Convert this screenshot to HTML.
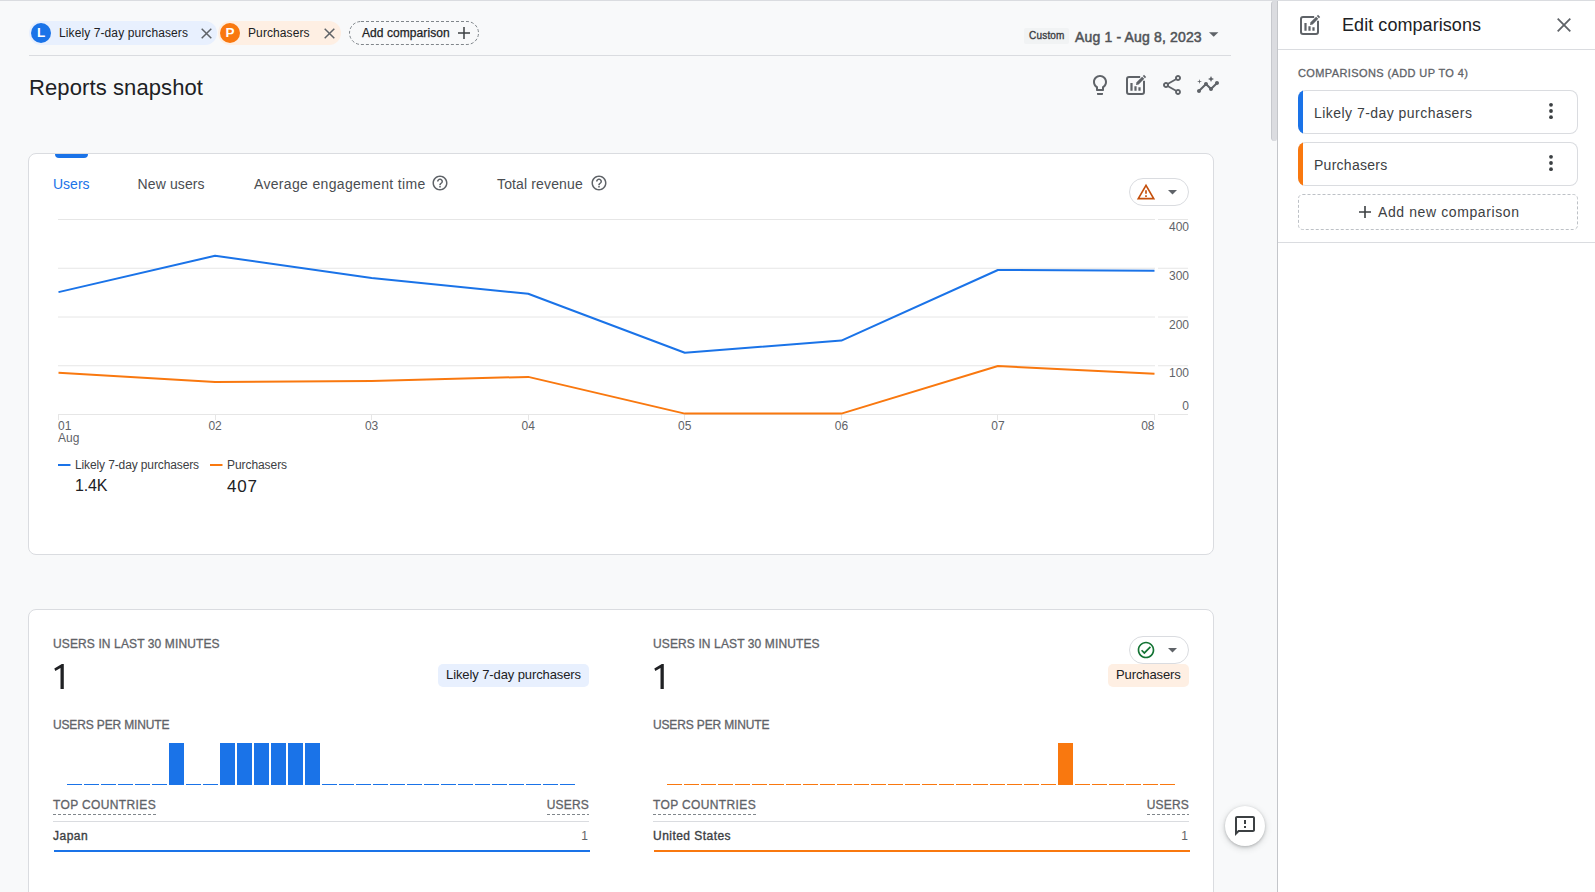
<!DOCTYPE html>
<html>
<head>
<meta charset="utf-8">
<title>Reports snapshot</title>
<style>
*{box-sizing:border-box;margin:0;padding:0}
html,body{width:1595px;height:892px;overflow:hidden;background:#f8f9fa;font-family:"Liberation Sans",sans-serif;color:#3c4043}
.abs{position:absolute}
.t{position:absolute;white-space:nowrap;line-height:1}
.med{-webkit-text-stroke:0.35px currentColor}
#topline{left:0;top:0;width:1595px;height:1px;background:#dadce0}
.chip{position:absolute;top:21px;height:24px;border-radius:12px}
.dot{position:absolute;top:2px;left:2px;width:20px;height:20px;border-radius:50%;color:#fff;font-size:13.5px;font-weight:bold;line-height:20px;text-align:center}
.hr{position:absolute;height:1px;background:#dadce0}
.card{position:absolute;background:#fff;border:1px solid #dadce0;border-radius:8px}
svg{position:absolute;overflow:visible}
.tab{font-size:14px;color:#4a4d51}
.ax{font-size:12px;color:#5f6368}
.pc{left:1298px;width:280px;height:44px;box-shadow:inset 0 0 0 1px #dadce0;border-radius:8px;background:#fff;overflow:hidden}
.pc i{position:absolute;left:0;top:0;width:4.7px;height:100%}
.pct{font-size:14px;color:#3c4043}
.cap{font-size:12px;color:#5f6368;letter-spacing:0.3px;-webkit-text-stroke:0.3px currentColor}
.cap2{font-size:12px;color:#5f6368;letter-spacing:0.37px;-webkit-text-stroke:0.3px currentColor}
.pill{width:60px;height:28px;border:1px solid #dadce0;border-radius:14px;background:#fff}
</style>
</head>
<body>
<div class="abs" id="topline"></div>

<!-- comparison chips -->
<div class="chip" style="left:29px;width:188px;background:#e8f0fe">
  <div class="dot" style="background:#1a73e8">L</div>
  <div class="t" style="left:30px;top:6px;font-size:12px;color:#202124;letter-spacing:0.1px">Likely 7-day purchasers</div>
  <svg style="left:172px;top:7px" width="11" height="11" viewBox="0 0 11 11"><path d="M0.7 0.7L10.3 10.3M10.3 0.7L0.7 10.3" stroke="#5f6368" stroke-width="1.5" fill="none"/></svg>
</div>
<div class="chip" style="left:218px;width:123px;background:#feefe3">
  <div class="dot" style="background:#f9780f">P</div>
  <div class="t" style="left:30px;top:6px;font-size:12px;color:#202124;letter-spacing:0.1px">Purchasers</div>
  <svg style="left:105.5px;top:7px" width="11" height="11" viewBox="0 0 11 11"><path d="M0.7 0.7L10.3 10.3M10.3 0.7L0.7 10.3" stroke="#5f6368" stroke-width="1.5" fill="none"/></svg>
</div>
<svg style="left:349px;top:21px" width="130" height="24" viewBox="0 0 130 24"><rect x="0.5" y="0.5" width="129" height="23" rx="11.5" fill="none" stroke="#80868b" stroke-width="1" stroke-dasharray="3 2"/></svg>
<div class="abs" style="left:350px;top:22px;width:128px;height:22px">
  <div class="t med" style="left:12px;top:5px;font-size:12px;color:#202124;letter-spacing:0.07px;-webkit-text-stroke:0.25px currentColor">Add comparison</div>
  <svg style="left:108px;top:5px" width="12" height="12" viewBox="0 0 12 12"><path d="M6 0V12M0 6H12" stroke="#3c4043" stroke-width="1.5" fill="none"/></svg>
</div>

<!-- date range -->
<div class="abs" style="left:1024px;top:28px;width:45px;height:16px;background:#f1f3f4;border-radius:2px"></div>
<div class="t med" style="left:1029px;top:31px;font-size:10px;color:#3c4043;letter-spacing:0.2px">Custom</div>
<div class="t med" id="daterange" style="left:1075px;top:30px;font-size:14px;color:#505357;letter-spacing:0.16px;-webkit-text-stroke:0.5px currentColor">Aug 1 - Aug 8, 2023</div>
<svg style="left:1209.2px;top:32px" width="9.4" height="5" viewBox="0 0 10 5"><path d="M0 0H10L5 5Z" fill="#5f6368"/></svg>

<div class="hr" style="left:29px;top:55px;width:1202px"></div>

<div class="t" id="title" style="left:29px;top:77px;font-size:22px;letter-spacing:0.1px;color:#202124">Reports snapshot</div>


<svg width="0" height="0" style="left:0;top:0"><defs>
<g id="editcmp"><path d="M16.2 4H5a2 2 0 0 0-2 2v13a2 2 0 0 0 2 2h13a2 2 0 0 0 2-2V7.8" stroke="#5f6368" stroke-width="2" fill="none"/><path d="M7.5 10V17.8M11.5 13.2V17.8M15.5 14.2V17.8" stroke="#5f6368" stroke-width="2.2" fill="none"/><path d="M12 12L12.54 9.34L18.14 3.74L20.26 5.86L14.66 11.46Z" fill="#5f6368"/><path d="M18.84 3.04L20.04 1.84L22.16 3.96L20.96 5.16Z" fill="#5f6368"/></g>
<g id="help"><path d="M11 18h2v-2h-2v2zm1-16C6.48 2 2 6.48 2 12s4.48 10 10 10 10-4.48 10-10S17.52 2 12 2zm0 18c-4.41 0-8-3.59-8-8s3.590-8 8-8 8 3.590 8 8-3.590 8-8 8zm0-14c-2.210 0-4 1.790-4 4h2c0-1.100.900-2 2-2s2 .900 2 2c0 2-3 1.750-3 5h2c0-2.250 3-2.500 3-5 0-2.210-1.790-4-4-4z" fill="#5f6368"/></g>
</defs></svg>

<!-- header icons -->
<svg style="left:1088px;top:73px" width="24" height="24" viewBox="0 0 24 24" fill="#5f6368"><path d="M9 21c0 .55.45 1 1 1h4c.55 0 1-.45 1-1v-1H9v1zm3-19C8.14 2 5 5.14 5 9c0 2.38 1.19 4.47 3 5.74V17c0 .55.45 1 1 1h6c.55 0 1-.45 1-1v-2.26c1.81-1.27 3-3.36 3-5.74 0-3.86-3.14-7-7-7zm2.85 11.1l-.85.6V16h-4v-2.3l-.85-.6C7.8 12.16 7 10.63 7 9c0-2.76 2.24-5 5-5s5 2.24 5 5c0 1.63-.8 3.16-2.15 4.1z"/></svg>
<svg style="left:1124px;top:73px" width="24" height="24" viewBox="0 0 24 24"><use href="#editcmp"/></svg>
<svg style="left:1160px;top:73px" width="24" height="24" viewBox="0 0 24 24" fill="#5f6368" fill-rule="evenodd"><path d="M18 16.08c-.76 0-1.44.3-1.96.77L8.91 12.7c.05-.23.09-.46.09-.7s-.04-.47-.09-.7l7.05-4.11c.54.5 1.25.81 2.04.81 1.66 0 3-1.34 3-3s-1.34-3-3-3-3 1.34-3 3c0 .24.04.47.09.7L8.04 9.81C7.5 9.31 6.79 9 6 9c-1.66 0-3 1.34-3 3s1.34 3 3 3c.79 0 1.5-.31 2.04-.81l7.12 4.16c-.05.21-.08.43-.08.65 0 1.61 1.31 2.92 2.92 2.92s2.92-1.31 2.92-2.92c0-1.61-1.31-2.92-2.92-2.92zM18 4c.55 0 1 .45 1 1s-.45 1-1 1-1-.45-1-1 .45-1 1-1zM6 13c-.55 0-1-.45-1-1s.45-1 1-1 1 .45 1 1-.45 1-1 1zm12 7.02c-.55 0-1-.45-1-1s.45-1 1-1 1 .45 1 1-.45 1-1 1z"/></svg>
<svg style="left:1196px;top:73px" width="24" height="24" viewBox="0 0 24 24" fill="#5f6368"><path d="M21 8c-1.45 0-2.26 1.44-1.93 2.51l-3.55 3.56c-.3-.09-.74-.09-1.04 0l-2.55-2.55C12.27 10.45 11.46 9 10 9c-1.45 0-2.27 1.44-1.93 2.52l-4.56 4.55C2.44 15.74 1 16.55 1 18c0 1.1.9 2 2 2 1.45 0 2.26-1.44 1.93-2.51l4.55-4.56c.3.09.74.09 1.04 0l2.55 2.55C12.73 16.55 13.54 18 15 18c1.45 0 2.27-1.44 1.93-2.52l3.56-3.55c1.07.33 2.51-.48 2.51-1.93 0-1.1-.9-2-2-2z"/><path d="M15 9l.94-2.07L18 6l-2.06-.93L15 3l-.92 2.07L12 6l2.08.93z"/><path d="M3.5 11L4 9l2-.5L4 8l-.5-2L3 8l-2 .5L3 9z"/></svg>

<!-- MAIN CHART CARD -->
<div class="card" id="card1" style="left:28px;top:153px;width:1186px;height:402px"></div>


<div class="abs" style="left:55px;top:154px;width:33px;height:4px;background:#1a73e8;border-radius:0 0 4px 4px"></div>
<div class="t tab" id="tab1" style="left:53px;top:177px;color:#1a73e8">Users</div>
<div class="t tab" id="tab2" style="letter-spacing:0.12px;left:137.5px;top:177px">New users</div>
<div class="t tab" id="tab3" style="letter-spacing:0.33px;left:254px;top:177px">Average engagement time</div>
<svg style="left:431px;top:174px" width="18" height="18" viewBox="0 0 24 24"><use href="#help"/></svg>
<div class="t tab" id="tab4" style="letter-spacing:0.14px;left:497px;top:177px">Total revenue</div>
<svg style="left:589.6px;top:174px" width="18" height="18" viewBox="0 0 24 24"><use href="#help"/></svg>
<div class="abs pill" style="left:1129px;top:178px"></div>
<svg style="left:1136px;top:182px" width="20" height="20" viewBox="0 0 24 24" fill="#c5500d"><path d="M12 5.99L19.53 19H4.47L12 5.99M12 2L1 21h22L12 2zm1 14h-2v2h2v-2zm0-6h-2v4h2v-4z"/></svg>
<svg style="left:1167.7px;top:189.9px" width="9" height="4.5" viewBox="0 0 10 5"><path d="M0 0H10L5 5Z" fill="#5f6368"/></svg>

<svg id="chart" style="left:0;top:0" width="1270" height="600" viewBox="0 0 1270 600">
<line x1="58" y1="219.5" x2="1155" y2="219.5" stroke="#e6e6e6" stroke-width="1"/><line x1="1158" y1="219.5" x2="1188" y2="219.5" stroke="#e6e6e6" stroke-width="1"/><line x1="58" y1="268.25" x2="1155" y2="268.25" stroke="#e6e6e6" stroke-width="1"/><line x1="1158" y1="268.25" x2="1188" y2="268.25" stroke="#e6e6e6" stroke-width="1"/><line x1="58" y1="317" x2="1155" y2="317" stroke="#e6e6e6" stroke-width="1"/><line x1="1158" y1="317" x2="1188" y2="317" stroke="#e6e6e6" stroke-width="1"/><line x1="58" y1="365.75" x2="1155" y2="365.75" stroke="#e6e6e6" stroke-width="1"/><line x1="1158" y1="365.75" x2="1188" y2="365.75" stroke="#e6e6e6" stroke-width="1"/><line x1="58" y1="414.5" x2="1155" y2="414.5" stroke="#e6e6e6" stroke-width="1"/><line x1="1158" y1="414.5" x2="1188" y2="414.5" stroke="#e6e6e6" stroke-width="1"/><rect x="58" y="414" width="1" height="6" fill="#e6e6e6"/><rect x="215" y="414" width="1" height="6" fill="#e6e6e6"/><rect x="371" y="414" width="1" height="6" fill="#e6e6e6"/><rect x="528" y="414" width="1" height="6" fill="#e6e6e6"/><rect x="684" y="414" width="1" height="6" fill="#e6e6e6"/><rect x="841" y="414" width="1" height="6" fill="#e6e6e6"/><rect x="997" y="414" width="1" height="6" fill="#e6e6e6"/><rect x="1154" y="414" width="1" height="6" fill="#e6e6e6"/>
<polyline points="58.5,372.8 215.1,382.1 371.6,380.9 528.2,376.9 684.8,413.6 841.4,413.6 997.9,366.0 1154.5,373.7" fill="none" stroke="#f9780f" stroke-width="2" stroke-linejoin="round"/>
<polyline points="58.5,292.1 215.1,255.8 371.6,278.0 528.2,293.8 684.8,352.7 841.4,340.6 997.9,270.0 1154.5,270.8" fill="none" stroke="#1a73e8" stroke-width="2" stroke-linejoin="round"/>
<line x1="58" y1="465" x2="70.5" y2="465" stroke="#1a73e8" stroke-width="2"/>
<line x1="210" y1="465" x2="222.5" y2="465" stroke="#f9780f" stroke-width="2"/>
</svg>

<div class="t ax" style="right:406px;top:221px">400</div><div class="t ax" style="right:406px;top:270px">300</div><div class="t ax" style="right:406px;top:319px">200</div><div class="t ax" style="right:406px;top:367px">100</div><div class="t ax" style="right:406px;top:400px">0</div>
<div class="t ax" style="left:58px;top:420px">01</div><div class="t ax" style="left:58px;top:432px">Aug</div><div class="t ax" style="left:195.1px;width:40px;text-align:center;top:420px">02</div><div class="t ax" style="left:351.6px;width:40px;text-align:center;top:420px">03</div><div class="t ax" style="left:508.2px;width:40px;text-align:center;top:420px">04</div><div class="t ax" style="left:664.8px;width:40px;text-align:center;top:420px">05</div><div class="t ax" style="left:821.4px;width:40px;text-align:center;top:420px">06</div><div class="t ax" style="left:977.9px;width:40px;text-align:center;top:420px">07</div><div class="t ax" style="right:440.5px;top:420px">08</div>
<div class="t ax" id="leg1" style="color:#3c4043;letter-spacing:-0.12px;left:75px;top:459px">Likely 7-day purchasers</div>
<div class="t ax" id="leg2" style="color:#3c4043;letter-spacing:-0.07px;left:227px;top:459px">Purchasers</div>
<div class="t" id="val1" style="left:75px;top:478px;font-size:16px;letter-spacing:-0.2px;color:#202124">1.4K</div>
<div class="t" id="val2" style="left:227px;top:478px;font-size:17px;letter-spacing:0.8px;color:#202124">407</div>

<!-- REALTIME CARD -->
<div class="card" id="card2" style="left:28px;top:609px;width:1186px;height:300px"></div>


<div class="t cap" style="left:53px;top:638px;letter-spacing:0.12px">USERS IN LAST 30 MINUTES</div>
<svg id="bigA" style="left:0px;top:0" width="100" height="700" viewBox="0 0 100 700"><path d="M63.8 664L63.8 688.9L60.5 688.9L60.5 667.9L55.3 671.1L54.3 668.6L61.8 664Z" fill="#202124"/></svg>
<div class="abs" style="left:438px;top:664px;width:151px;height:23px;border-radius:5px;background:#e8f0fe"></div>
<div class="t" id="badgeA" style="left:446px;top:668px;font-size:13px;color:#202124;letter-spacing:-0.1px">Likely 7-day purchasers</div>
<div class="t cap" style="left:53px;top:719px;letter-spacing:-0.15px">USERS PER MINUTE</div>
<div class="abs" style="left:67px;top:783.5px;width:15px;height:1.5px;background:#1a73e8"></div><div class="abs" style="left:84px;top:783.5px;width:15px;height:1.5px;background:#1a73e8"></div><div class="abs" style="left:101px;top:783.5px;width:15px;height:1.5px;background:#1a73e8"></div><div class="abs" style="left:118px;top:783.5px;width:15px;height:1.5px;background:#1a73e8"></div><div class="abs" style="left:135px;top:783.5px;width:15px;height:1.5px;background:#1a73e8"></div><div class="abs" style="left:152px;top:783.5px;width:15px;height:1.5px;background:#1a73e8"></div><div class="abs" style="left:169px;top:743px;width:15px;height:42px;background:#1a73e8"></div><div class="abs" style="left:186px;top:783.5px;width:15px;height:1.5px;background:#1a73e8"></div><div class="abs" style="left:203px;top:783.5px;width:15px;height:1.5px;background:#1a73e8"></div><div class="abs" style="left:220px;top:743px;width:15px;height:42px;background:#1a73e8"></div><div class="abs" style="left:237px;top:743px;width:15px;height:42px;background:#1a73e8"></div><div class="abs" style="left:254px;top:743px;width:15px;height:42px;background:#1a73e8"></div><div class="abs" style="left:271px;top:743px;width:15px;height:42px;background:#1a73e8"></div><div class="abs" style="left:288px;top:743px;width:15px;height:42px;background:#1a73e8"></div><div class="abs" style="left:305px;top:743px;width:15px;height:42px;background:#1a73e8"></div><div class="abs" style="left:322px;top:783.5px;width:15px;height:1.5px;background:#1a73e8"></div><div class="abs" style="left:339px;top:783.5px;width:15px;height:1.5px;background:#1a73e8"></div><div class="abs" style="left:356px;top:783.5px;width:15px;height:1.5px;background:#1a73e8"></div><div class="abs" style="left:373px;top:783.5px;width:15px;height:1.5px;background:#1a73e8"></div><div class="abs" style="left:390px;top:783.5px;width:15px;height:1.5px;background:#1a73e8"></div><div class="abs" style="left:407px;top:783.5px;width:15px;height:1.5px;background:#1a73e8"></div><div class="abs" style="left:424px;top:783.5px;width:15px;height:1.5px;background:#1a73e8"></div><div class="abs" style="left:441px;top:783.5px;width:15px;height:1.5px;background:#1a73e8"></div><div class="abs" style="left:458px;top:783.5px;width:15px;height:1.5px;background:#1a73e8"></div><div class="abs" style="left:475px;top:783.5px;width:15px;height:1.5px;background:#1a73e8"></div><div class="abs" style="left:492px;top:783.5px;width:15px;height:1.5px;background:#1a73e8"></div><div class="abs" style="left:509px;top:783.5px;width:15px;height:1.5px;background:#1a73e8"></div><div class="abs" style="left:526px;top:783.5px;width:15px;height:1.5px;background:#1a73e8"></div><div class="abs" style="left:543px;top:783.5px;width:15px;height:1.5px;background:#1a73e8"></div><div class="abs" style="left:560px;top:783.5px;width:15px;height:1.5px;background:#1a73e8"></div>
<div class="t cap2" id="tcA" style="left:53px;top:799px">TOP COUNTRIES</div>
<div class="abs" style="left:53px;top:814px;width:103px;height:1px;background:repeating-linear-gradient(90deg,#80868b 0 3px,transparent 3px 5px)"></div>
<div class="t cap2" id="usA" style="letter-spacing:0.2px;right:1006px;top:799px">USERS</div>
<div class="abs" style="left:547px;top:814px;width:42px;height:1px;background:repeating-linear-gradient(90deg,#80868b 0 3px,transparent 3px 5px)"></div>
<div class="hr" style="left:53px;top:821px;width:536px"></div>
<div class="t med" id="ctryA" style="letter-spacing:0.5px;left:53px;top:830px;font-size:12px;color:#3c4043">Japan</div>
<div class="t" style="right:1007px;top:830px;font-size:12px;color:#5f6368">1</div>
<div class="abs" style="left:54px;top:850px;width:536px;height:2px;background:#1a73e8"></div>

<div class="t cap" style="left:653px;top:638px;letter-spacing:0.12px">USERS IN LAST 30 MINUTES</div>
<svg id="bigB" style="left:600px;top:0" width="100" height="700" viewBox="0 0 100 700"><path d="M63.8 664L63.8 688.9L60.5 688.9L60.5 667.9L55.3 671.1L54.3 668.6L61.8 664Z" fill="#202124"/></svg>
<div class="abs" style="left:1108px;top:664px;width:81px;height:23px;border-radius:5px;background:#feefe3"></div>
<div class="t" id="badgeB" style="left:1116px;top:668px;font-size:13px;color:#202124;letter-spacing:-0.1px">Purchasers</div>
<div class="t cap" style="left:653px;top:719px;letter-spacing:-0.15px">USERS PER MINUTE</div>
<div class="abs" style="left:667px;top:783.5px;width:15px;height:1.5px;background:#f9780f"></div><div class="abs" style="left:684px;top:783.5px;width:15px;height:1.5px;background:#f9780f"></div><div class="abs" style="left:701px;top:783.5px;width:15px;height:1.5px;background:#f9780f"></div><div class="abs" style="left:718px;top:783.5px;width:15px;height:1.5px;background:#f9780f"></div><div class="abs" style="left:735px;top:783.5px;width:15px;height:1.5px;background:#f9780f"></div><div class="abs" style="left:752px;top:783.5px;width:15px;height:1.5px;background:#f9780f"></div><div class="abs" style="left:769px;top:783.5px;width:15px;height:1.5px;background:#f9780f"></div><div class="abs" style="left:786px;top:783.5px;width:15px;height:1.5px;background:#f9780f"></div><div class="abs" style="left:803px;top:783.5px;width:15px;height:1.5px;background:#f9780f"></div><div class="abs" style="left:820px;top:783.5px;width:15px;height:1.5px;background:#f9780f"></div><div class="abs" style="left:837px;top:783.5px;width:15px;height:1.5px;background:#f9780f"></div><div class="abs" style="left:854px;top:783.5px;width:15px;height:1.5px;background:#f9780f"></div><div class="abs" style="left:871px;top:783.5px;width:15px;height:1.5px;background:#f9780f"></div><div class="abs" style="left:888px;top:783.5px;width:15px;height:1.5px;background:#f9780f"></div><div class="abs" style="left:905px;top:783.5px;width:15px;height:1.5px;background:#f9780f"></div><div class="abs" style="left:922px;top:783.5px;width:15px;height:1.5px;background:#f9780f"></div><div class="abs" style="left:939px;top:783.5px;width:15px;height:1.5px;background:#f9780f"></div><div class="abs" style="left:956px;top:783.5px;width:15px;height:1.5px;background:#f9780f"></div><div class="abs" style="left:973px;top:783.5px;width:15px;height:1.5px;background:#f9780f"></div><div class="abs" style="left:990px;top:783.5px;width:15px;height:1.5px;background:#f9780f"></div><div class="abs" style="left:1007px;top:783.5px;width:15px;height:1.5px;background:#f9780f"></div><div class="abs" style="left:1024px;top:783.5px;width:15px;height:1.5px;background:#f9780f"></div><div class="abs" style="left:1041px;top:783.5px;width:15px;height:1.5px;background:#f9780f"></div><div class="abs" style="left:1058px;top:743px;width:15px;height:42px;background:#f9780f"></div><div class="abs" style="left:1075px;top:783.5px;width:15px;height:1.5px;background:#f9780f"></div><div class="abs" style="left:1092px;top:783.5px;width:15px;height:1.5px;background:#f9780f"></div><div class="abs" style="left:1109px;top:783.5px;width:15px;height:1.5px;background:#f9780f"></div><div class="abs" style="left:1126px;top:783.5px;width:15px;height:1.5px;background:#f9780f"></div><div class="abs" style="left:1143px;top:783.5px;width:15px;height:1.5px;background:#f9780f"></div><div class="abs" style="left:1160px;top:783.5px;width:15px;height:1.5px;background:#f9780f"></div>
<div class="t cap2" id="tcB" style="left:653px;top:799px">TOP COUNTRIES</div>
<div class="abs" style="left:653px;top:814px;width:103px;height:1px;background:repeating-linear-gradient(90deg,#80868b 0 3px,transparent 3px 5px)"></div>
<div class="t cap2" id="usB" style="letter-spacing:0.2px;right:406px;top:799px">USERS</div>
<div class="abs" style="left:1147px;top:814px;width:42px;height:1px;background:repeating-linear-gradient(90deg,#80868b 0 3px,transparent 3px 5px)"></div>
<div class="hr" style="left:653px;top:821px;width:536px"></div>
<div class="t med" id="ctryB" style="letter-spacing:0.46px;left:653px;top:830px;font-size:12px;color:#3c4043">United States</div>
<div class="t" style="right:407px;top:830px;font-size:12px;color:#5f6368">1</div>
<div class="abs" style="left:654px;top:850px;width:536px;height:2px;background:#f9780f"></div>

<div class="abs pill" style="left:1129px;top:636px"></div>
<svg style="left:1136.4px;top:640px" width="20" height="20" viewBox="0 0 24 24" fill="#137333"><path d="M12 2C6.48 2 2 6.48 2 12s4.48 10 10 10 10-4.48 10-10S17.52 2 12 2zm0 18c-4.41 0-8-3.59-8-8s3.59-8 8-8 8 3.59 8 8-3.590 8-8 8zm4.59-12.420L10 14.170l-2.590-2.580L6 13l4 4 8-8z"/></svg>
<svg style="left:1167.8px;top:648.1px" width="9" height="4.5" viewBox="0 0 10 5"><path d="M0 0H10L5 5Z" fill="#5f6368"/></svg>
<!-- feedback fab -->
<div class="abs" style="left:1225px;top:806px;width:40px;height:40px;border-radius:50%;background:#fff;box-shadow:0 1px 3px rgba(60,64,67,.3),0 2px 6px 1px rgba(60,64,67,.15)"></div>
<svg style="left:1233px;top:814px" width="24" height="24" viewBox="0 0 24 24" fill="#3c4043"><path d="M20 2H4c-1.100 0-1.990.900-1.990 2L2 22l4-4h14c1.100 0 2-.900 2-2V4c0-1.100-.900-2-2-2zm0 14H5.170L4 17.170V4h16v12zm-9-4h2v2h-2zm0-6h2v4h-2z"/></svg>

<!-- scrollbar -->
<div class="abs" style="left:1271px;top:1px;width:6px;height:139.5px;background:#dbdce0;border-left:1px solid #c6c8cd;border-radius:4px 0 3px 4px"></div>
<div class="abs" style="left:1277px;top:1px;width:1px;height:891px;background:#c4c6ca"></div>

<!-- RIGHT PANEL -->
<div class="abs" id="panel" style="left:1278px;top:1px;width:317px;height:891px;background:#fff"></div>


<div class="abs" style="left:1278px;top:49px;width:317px;height:1px;background:#dadce0"></div>
<svg style="left:1298px;top:13px" width="24" height="24" viewBox="0 0 24 24"><use href="#editcmp"/></svg>
<div class="t" id="ptitle" style="letter-spacing:0.06px;left:1342px;top:16px;font-size:18px;color:#202124">Edit comparisons</div>
<svg style="left:1557px;top:18px" width="14" height="14" viewBox="0 0 14 14"><path d="M0.7 0.7L13.3 13.3M13.3 0.7L0.7 13.3" stroke="#5f6368" stroke-width="1.8" fill="none"/></svg>
<div class="t" id="psub" style="left:1298px;top:68px;font-size:11px;color:#5f6368;letter-spacing:0.39px;-webkit-text-stroke:0.3px currentColor">COMPARISONS (ADD UP TO 4)</div>
<div class="abs pc" style="top:90px"><i style="background:#1a73e8"></i></div>
<div class="t pct" id="pc1" style="letter-spacing:0.46px;left:1314px;top:105.5px">Likely 7-day purchasers</div>
<div class="abs pc" style="top:142px"><i style="background:#f9780f"></i></div>
<div class="t pct" id="pc2" style="letter-spacing:0.27px;left:1314px;top:157.5px">Purchasers</div>
<svg style="left:1549px;top:103.2px" width="4" height="16" viewBox="0 0 4 16" fill="#3c4043"><circle cx="2" cy="1.8" r="1.9"/><circle cx="2" cy="8" r="1.9"/><circle cx="2" cy="14.2" r="1.9"/></svg>
<svg style="left:1549px;top:155px" width="4" height="16" viewBox="0 0 4 16" fill="#3c4043"><circle cx="2" cy="1.8" r="1.9"/><circle cx="2" cy="8" r="1.9"/><circle cx="2" cy="14.2" r="1.9"/></svg>
<svg style="left:1298px;top:194px" width="280" height="36" viewBox="0 0 280 36"><rect x="0.5" y="0.5" width="279" height="35" rx="4" fill="none" stroke="#bdc1c6" stroke-width="1" stroke-dasharray="3 2"/></svg>
<svg style="left:1359px;top:206px" width="12" height="12" viewBox="0 0 12 12"><path d="M6 0V12M0 6H12" stroke="#3c4043" stroke-width="1.6" fill="none"/></svg>
<div class="t" id="padd" style="left:1378px;top:205px;font-size:14px;letter-spacing:0.6px;color:#3c4043">Add new comparison</div>
<div class="abs" style="left:1278px;top:242px;width:317px;height:1px;background:#dadce0"></div>

</body>
</html>
